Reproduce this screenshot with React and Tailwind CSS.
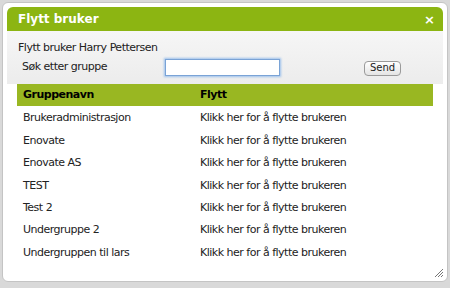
// Flytt bruker – modal dialog for moving a user to another group
const groups = [
  'Brukeradministrasjon',
  'Enovate',
  'Enovate AS',
  'TEST',
  'Test 2',
  'Undergruppe 2',
  'Undergruppen til lars',
];

const font = { fontFamily: '"DejaVu Sans", Verdana, sans-serif' };

const ResizeGrip = () => (
  <svg width="10" height="10" viewBox="0 0 10 10" className="absolute right-[3px] bottom-[3px]">
    <path d="M9 1 L1 9 M9 4 L4 9 M9 7 L7 9" stroke="#777" strokeWidth="1" />
  </svg>
);

export default function App() {
  return (
    <div className="w-[450px] h-[288px] bg-[#d9d9d9] pt-[2px] pl-[2px] overflow-hidden" style={font}>
      <div className="relative w-[446px] h-[280px] bg-white border border-[#c4c4c4] rounded-[6px] p-[4px] flex flex-col">
        {/* Title bar */}
        <div className="h-[24px] bg-[#8cb512] rounded-t-[6px] flex items-center justify-between pl-[11px] pr-[8px] text-white">
          <span className="text-[12px] font-bold">Flytt bruker</span>
          <span className="text-[13px] font-bold leading-none">×</span>
        </div>

        {/* Form area */}
        <div className="h-[53px] bg-gradient-to-b from-[#f6f6f6] to-[#ececec] text-[11px] tracking-[-0.5px] text-[#222]">
          <div className="pl-[11px] pt-[9px] leading-[15px]">Flytt bruker Harry Pettersen</div>
          <div className="flex items-center pl-[15px] mt-[4px]">
            <span className="w-[143px]">Søk etter gruppe</span>
            <input
              type="text"
              className="w-[115px] h-[17px] bg-white border border-[#7aa3d6] shadow-[0_0_2px_1px_#9cc0ec] outline-none text-[11px] px-[2px]"
            />
            <button className="ml-[84px] mt-[1px] h-[15px] px-[5px] rounded-[4px] border border-[#9a9a9a] bg-gradient-to-b from-white to-[#e4e4e4] text-[10px] tracking-normal leading-none">
              Send
            </button>
          </div>
        </div>

        {/* Groups table */}
        <div className="px-[10px] text-[11px] tracking-[-0.5px] text-[#222]">
          <div className="flex h-[22px] items-center pt-[1px] bg-[#99b722] font-bold text-black">
            <span className="w-[183px] pl-[6px]">Gruppenavn</span>
            <span>Flytt</span>
          </div>
          {groups.map((g) => (
            <div key={g} className="flex h-[22.4px] items-center pt-[3px]">
              <span className="w-[183px] pl-[6px]">{g}</span>
              <span>Klikk her for å flytte brukeren</span>
            </div>
          ))}
        </div>

        <ResizeGrip />
      </div>
    </div>
  );
}
